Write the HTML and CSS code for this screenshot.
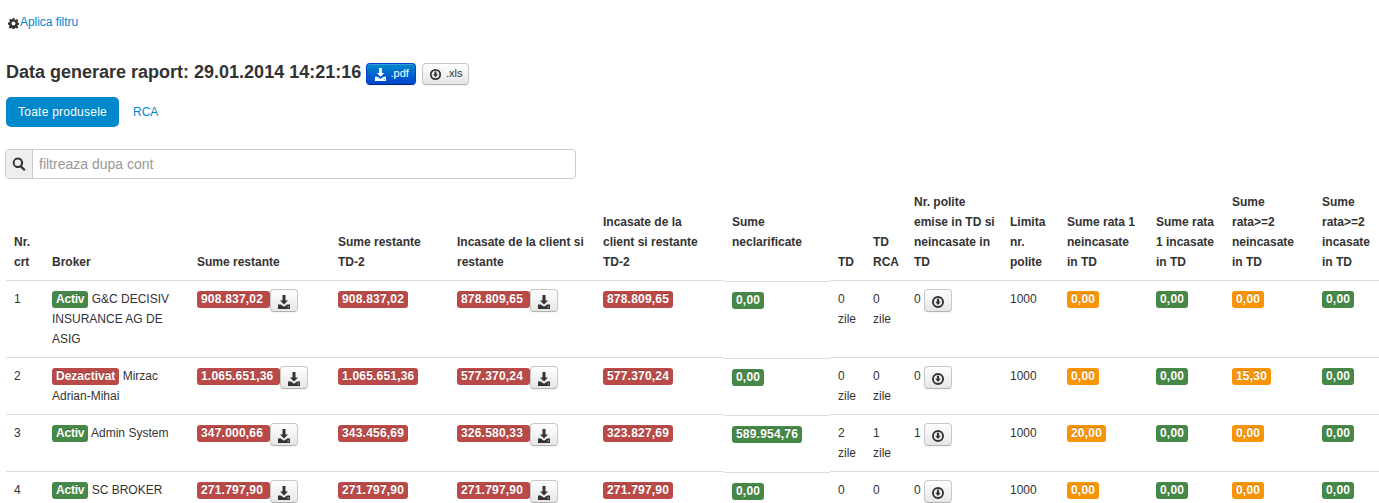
FILE: index.html
```html
<!DOCTYPE html>
<html lang="ro">
<head>
<meta charset="utf-8">
<title>Raport</title>
<link rel="stylesheet" href="styles.css">
</head>
<body>
<svg class="sprites" width="0" height="0" aria-hidden="true">
  <symbol id="i-dl" viewBox="0 0 14 14"><path d="M5.500 0h3v5.500H11L7 9.500 3 5.500h2.500zM1 9.500h2.800L7 11.800l3.200-2.300H13V14H1zM10.600 11.500v1h1.200v-1z" fill-rule="evenodd"/></symbol>
  <symbol id="i-circle" viewBox="0 0 14 14"><path d="M7 1a6 6 0 1 0 0 12A6 6 0 0 0 7 1zm0 1.900a4.100 4.100 0 1 1 0 8.200 4.100 4.100 0 0 1 0-8.200zM5.900 3.800h2.200v3h1.600L7 10 4.300 6.800h1.600z" fill-rule="evenodd"/></symbol>
  <symbol id="i-cog" viewBox="0 0 14 14"><path d="M5.800 0h2.400l.3 1.900 1.300.6 1.600-1.100 1.700 1.700-1.100 1.600.6 1.300 1.900.3v2.400l-1.900.3-.6 1.300 1.100 1.600-1.700 1.700-1.600-1.100-1.300.6-.3 1.900H5.800l-.3-1.900-1.300-.6-1.600 1.100-1.700-1.700 1.100-1.600-.6-1.300L0 8.200V5.800l1.900-.3.6-1.300-1.100-1.600 1.700-1.700 1.600 1.100 1.300-.6zM7 4.500a2.500 2.500 0 1 0 0 5 2.500 2.500 0 0 0 0-5z" fill-rule="evenodd"/></symbol>
  <symbol id="i-search" viewBox="0 0 14 14"><path d="M5.800 .5a5.300 5.300 0 0 1 4.300 8.400l3.500 3.500-1.600 1.600-3.500-3.500A5.300 5.300 0 1 1 5.800 .5zm0 2.100a3.200 3.200 0 1 0 0 6.400 3.200 3.200 0 0 0 0-6.400z" fill-rule="evenodd"/></symbol>
</svg>

<main class="page">
  <p class="filter-link"><svg class="icon icon-cog"><use href="#i-cog"/></svg><a href="#">Aplica filtru</a></p>

  <h4 class="report-title">Data generare raport: 29.01.2014 14:21:16
    <a class="btn btn-primary btn-export" href="#"><svg class="icon"><use href="#i-dl"/></svg><span>.pdf</span></a>
    <a class="btn btn-export btn-xls" href="#"><svg class="icon"><use href="#i-circle"/></svg><span>.xls</span></a>
  </h4>

  <ul class="pills">
    <li class="active"><a href="#">Toate produsele</a></li>
    <li><a href="#">RCA</a></li>
  </ul>

  <div class="search">
    <span class="search-addon"><svg class="icon"><use href="#i-search"/></svg></span>
    <input class="search-input" type="text" placeholder="filtreaza dupa cont">
  </div>

  <table class="report">
    <colgroup>
      <col class="c1"><col class="c2"><col class="c3"><col class="c4"><col class="c5"><col class="c6"><col class="c7"><col class="c8"><col class="c9"><col class="c10"><col class="c11"><col class="c12"><col class="c13"><col class="c14"><col class="c15">
    </colgroup>
    <thead>
      <tr>
        <th>Nr. crt</th>
        <th>Broker</th>
        <th>Sume restante</th>
        <th>Sume restante TD-2</th>
        <th>Incasate de la client si restante</th>
        <th>Incasate de la client si restante TD-2</th>
        <th>Sume neclarificate<br><br></th>
        <th>TD</th>
        <th>TD RCA</th>
        <th class="nowrap">Nr. polite<br>emise in TD si<br>neincasate in<br>TD</th>
        <th>Limita nr. polite</th>
        <th>Sume rata 1 neincasate in TD</th>
        <th>Sume rata 1 incasate in TD</th>
        <th>Sume rata&gt;=2 neincasate in TD</th>
        <th>Sume rata&gt;=2 incasate in TD</th>
      </tr>
    </thead>
    <tbody>
      <tr>
        <td>1</td>
        <td><span class="label green word">Activ</span> G&amp;C DECISIV INSURANCE AG DE ASIG</td>
        <td><span class="label red">908.837,02 </span><a class="btn btn-row" href="#"><svg class="icon"><use href="#i-dl"/></svg></a></td>
        <td><span class="label red">908.837,02</span></td>
        <td><span class="label red">878.809,65 </span><a class="btn btn-row" href="#"><svg class="icon"><use href="#i-dl"/></svg></a></td>
        <td><span class="label red">878.809,65</span></td>
        <td class="neclar"><span class="label green">0,00</span></td>
        <td>0 zile</td>
        <td>0 zile</td>
        <td>0 <a class="btn btn-row" href="#"><svg class="icon"><use href="#i-circle"/></svg></a></td>
        <td>1000</td>
        <td><span class="label orange">0,00</span></td>
        <td><span class="label green">0,00</span></td>
        <td><span class="label orange">0,00</span></td>
        <td><span class="label green">0,00</span></td>
      </tr>
      <tr>
        <td>2</td>
        <td><span class="label red status">Dezactivat</span> Mirzac Adrian-Mihai</td>
        <td><span class="label red">1.065.651,36 </span><a class="btn btn-row" href="#"><svg class="icon"><use href="#i-dl"/></svg></a></td>
        <td><span class="label red">1.065.651,36</span></td>
        <td><span class="label red">577.370,24 </span><a class="btn btn-row" href="#"><svg class="icon"><use href="#i-dl"/></svg></a></td>
        <td><span class="label red">577.370,24</span></td>
        <td class="neclar"><span class="label green">0,00</span></td>
        <td>0 zile</td>
        <td>0 zile</td>
        <td>0 <a class="btn btn-row" href="#"><svg class="icon"><use href="#i-circle"/></svg></a></td>
        <td>1000</td>
        <td><span class="label orange">0,00</span></td>
        <td><span class="label green">0,00</span></td>
        <td><span class="label orange">15,30</span></td>
        <td><span class="label green">0,00</span></td>
      </tr>
      <tr>
        <td>3</td>
        <td><span class="label green word">Activ</span> Admin System</td>
        <td><span class="label red">347.000,66 </span><a class="btn btn-row" href="#"><svg class="icon"><use href="#i-dl"/></svg></a></td>
        <td><span class="label red">343.456,69</span></td>
        <td><span class="label red">326.580,33 </span><a class="btn btn-row" href="#"><svg class="icon"><use href="#i-dl"/></svg></a></td>
        <td><span class="label red">323.827,69</span></td>
        <td class="neclar"><span class="label green">589.954,76</span></td>
        <td>2 zile</td>
        <td>1 zile</td>
        <td>1 <a class="btn btn-row" href="#"><svg class="icon"><use href="#i-circle"/></svg></a></td>
        <td>1000</td>
        <td><span class="label orange">20,00</span></td>
        <td><span class="label green">0,00</span></td>
        <td><span class="label orange">0,00</span></td>
        <td><span class="label green">0,00</span></td>
      </tr>
      <tr>
        <td>4</td>
        <td><span class="label green word">Activ</span> SC BROKER</td>
        <td><span class="label red">271.797,90 </span><a class="btn btn-row" href="#"><svg class="icon"><use href="#i-dl"/></svg></a></td>
        <td><span class="label red">271.797,90</span></td>
        <td><span class="label red">271.797,90 </span><a class="btn btn-row" href="#"><svg class="icon"><use href="#i-dl"/></svg></a></td>
        <td><span class="label red">271.797,90</span></td>
        <td class="neclar"><span class="label green">0,00</span></td>
        <td>0 zile</td>
        <td>0 zile</td>
        <td>0 <a class="btn btn-row" href="#"><svg class="icon"><use href="#i-circle"/></svg></a></td>
        <td>1000</td>
        <td><span class="label orange">0,00</span></td>
        <td><span class="label green">0,00</span></td>
        <td><span class="label orange">0,00</span></td>
        <td><span class="label green">0,00</span></td>
      </tr>
    </tbody>
  </table>
</main>
</body>
</html>
```
FILE: styles.css
```css
html { overflow: hidden; height: 100%; }
body {
  margin: 0;
  height: 100%;
  overflow: hidden;
  background: #fff;
  color: #333;
  font: 12px/20px "Liberation Sans", Arial, sans-serif;
}
a { color: #08c; text-decoration: none; }
.sprites { display: block; height: 0; }
.page { padding: 12px 0 0 6px; }
.icon { width: 14px; height: 14px; fill: currentColor; vertical-align: -3px; }

.filter-link { margin: 0 0 0 2px; height: 20px; display: flex; align-items: center; letter-spacing: -.05px; }
.icon-cog { width: 11px; height: 11px; color: #333; margin: 2px 1px 0 0; flex: none; }

.report-title {
  margin: 20px 0 0;
  font-size: 18px;
  line-height: 40px;
  font-weight: 700;
  white-space: nowrap;
}
.btn {
  display: inline-block;
  box-sizing: border-box;
  border: 1px solid #c8c8c8;
  border-bottom-color: #b3b3b3;
  border-radius: 4px;
  background: linear-gradient(#fff, #e6e6e6);
  box-shadow: inset 0 1px 0 rgba(255,255,255,.2), 0 1px 2px rgba(0,0,0,.05);
  color: #333;
  text-align: center;
}
.btn-export {
  height: 22px;
  padding: 0 4px;
  font-size: 11px;
  line-height: 19px;
  font-weight: 400;
  white-space: nowrap;
}
.btn-export span { margin-left: 4px; vertical-align: 1px; }
.btn-export .icon { width: 13px; height: 13px; }
.btn-primary {
  width: 50px;
  border-color: #04c #04c #002a80;
  background: linear-gradient(#08c, #04c);
  color: #fff;
}
.btn-xls { width: 47px; margin-left: 1px; }
.btn-row {
  width: 28px;
  height: 23px;
  line-height: 25px;
  vertical-align: -3px;
}

.pills { display: flex; margin: 5px 0 0; padding: 0; list-style: none; }
.pills a { display: block; padding: 5px 12px; line-height: 20px; border-radius: 5px; }
.pills .active a { background: #08c; color: #fff; letter-spacing: .02em; }
.pills li + li { margin-left: 2px; }

.search {
  display: flex;
  box-sizing: border-box;
  width: 571px;
  height: 30px;
  margin: 22px 0 0 -1px;
  border: 1px solid #ccc;
  border-radius: 4px;
}
.search-addon {
  flex: none;
  width: 26px;
  display: flex;
  align-items: center;
  justify-content: center;
  background: #eee;
  border-right: 1px solid #ccc;
  border-radius: 3px 0 0 3px;
}
.search-input {
  flex: 1;
  min-width: 0;
  border: 0;
  padding: 0 6px;
  outline: 0;
  background: none;
  font: 14px "Liberation Sans", Arial, sans-serif;
  color: #555;
}
.search-input::placeholder { color: #999; opacity: 1; }

.report {
  margin-top: 5px;
  width: 1373px;
  table-layout: fixed;
  border-collapse: separate;
  border-spacing: 0;
}
.report th, .report td { padding: 8px; text-align: left; line-height: 20px; }
.report th { vertical-align: bottom; font-weight: 700; }
.report th.nowrap { white-space: nowrap; }
.report td { vertical-align: top; border-top: 1px solid #ddd; }
.report td.neclar {
  padding-top: 9px;
  border-top-color: #fff;
  background: linear-gradient(#ddd, #ddd) 0 0 / 100% 1px no-repeat;
}
.c1 { width: 38px; }
.c2 { width: 145px; }
.c3 { width: 141px; }
.c4 { width: 119px; }
.c5 { width: 146px; }
.c6 { width: 129px; }
.c7 { width: 106px; }
.c8 { width: 35px; }
.c9 { width: 41px; }
.c10 { width: 96px; }
.c11 { width: 57px; }
.c12 { width: 89px; }
.c13 { width: 76px; }
.c14 { width: 90px; }
.c15 { width: 65px; }

.label {
  display: inline-block;
  padding: 1px 4px 2px;
  border-radius: 3px;
  color: #fff;
  font-weight: 700;
  line-height: 14px;
  letter-spacing: .2px;
  word-spacing: -1px;
  white-space: pre-wrap;
  text-shadow: 0 -1px 0 rgba(0,0,0,.25);
}
.label.word { letter-spacing: -.2px; }
.label.status { letter-spacing: 0; }
.red { background: #b94a48; }
.green { background: #468847; }
.orange { background: #f89406; }
```
